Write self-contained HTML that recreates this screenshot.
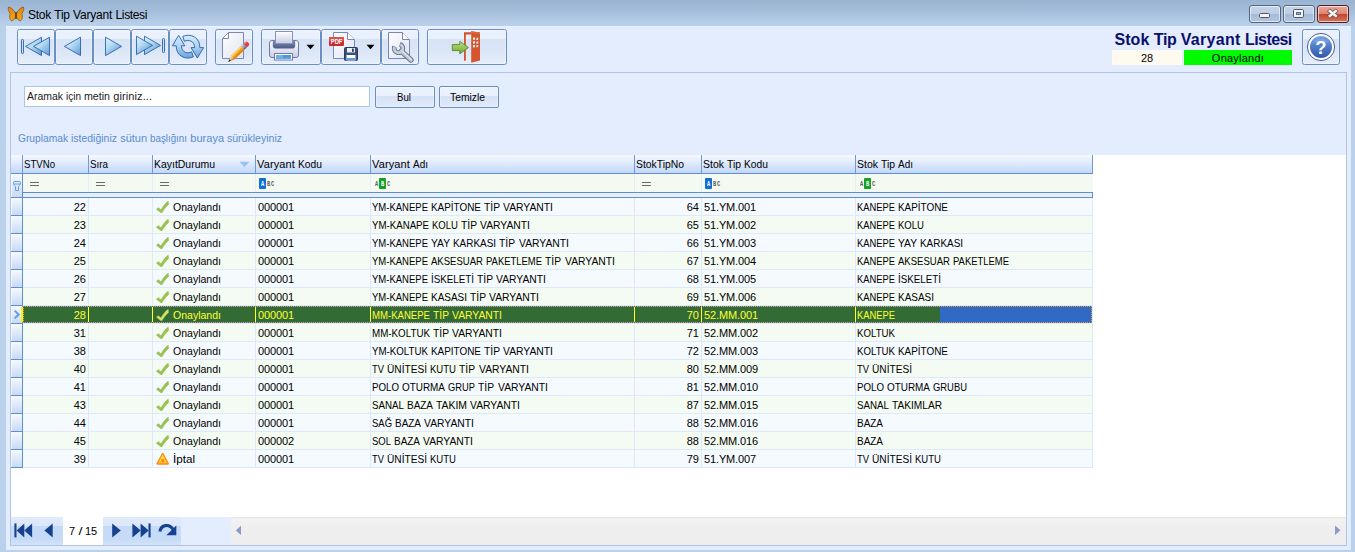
<!DOCTYPE html>
<html lang="tr">
<head>
<meta charset="utf-8">
<title>Stok Tip Varyant Listesi</title>
<style>
*{box-sizing:border-box;margin:0;padding:0}
html,body{width:1355px;height:552px;overflow:hidden}
body{position:relative;background:#b9d1ea;font-family:"Liberation Sans",sans-serif;font-size:11px;color:#000}
div,svg{position:absolute}
span{white-space:nowrap}
.w{display:inline-block;transform-origin:0 50%;vertical-align:baseline}
#titlebar{left:0;top:0;width:1355px;height:26px;background:linear-gradient(#99b4d1 0,#a2bbd8 35%,#b3cbe6 80%,#b9d1ea 100%)}
#client{left:6px;top:26px;width:1345px;height:524px;background:#e3edfd;border-top:1px solid #eaf2fe}
#title{left:28px;top:8px;font-size:12px;line-height:14px;white-space:nowrap;color:#000}
.cap{top:5px;width:32px;height:18px;border:1px solid #56657f;border-radius:3px;box-shadow:inset 0 0 0 1px rgba(255,255,255,.6)}
.capn{background:linear-gradient(#c4d5ea 0,#bccfe6 48%,#a4bbd8 50%,#b1c6e0 100%)}
.capx{border-color:#5a1a1e;background:linear-gradient(#e9a999 0,#dc8672 48%,#c0452b 50%,#d4755c 100%)}
.tb{top:29px;height:36px;border:1px solid #6c8fc2;border-radius:2.500px;background:linear-gradient(#ebf2fd 0,#e8f0fc 9px,#d7e3f6 9px,#dbe6f7 22px,#e6eefb 34px);box-shadow:inset 0 0 0 1px rgba(255,255,255,.3)}
#panel{left:10px;top:72px;width:1337px;height:474px;border:1px solid #b0c4e4;background:#e3edfd}
#search{left:24px;top:86px;width:346px;height:21px;border:1px solid #a9c3ea;background:#fff;line-height:19px;padding-left:2px;color:#1a1a1a;white-space:nowrap}
.btn{top:86px;height:22px;border:1px solid #6c8fc2;border-radius:2px;background:linear-gradient(#ecf3fd 0,#e8f0fc 9px,#d5e2f5 9px,#e0eaf9 20px);box-shadow:inset 0 0 0 1px rgba(255,255,255,.3);text-align:center;line-height:20px;color:#000;padding-right:2.500px}
#grouptxt{left:18px;top:131px;line-height:14px;color:#5b8bd0;white-space:nowrap}
#gridbg{left:11px;top:155px;width:1335px;height:362px;background:#fff}
.hd{top:155px;height:18px;background:linear-gradient(#f5f8fe 0,#e6effd 6px,#d6e4fb 11px,#c3d8f9 18px);border-right:1px solid #6f9ad6;line-height:19px;padding-left:1px;white-space:nowrap;overflow:hidden}
.ind{left:11px;width:12px;border-right:1px solid #5f8fd2;border-bottom:1px solid #5f8fd2;background:linear-gradient(#f6f9fe 0,#dce8f9 55%,#c6daf5 100%);box-shadow:inset 1px 0 0 rgba(255,255,255,.7)}
.row{left:23px;width:1070px;height:18px;border-bottom:1px solid #dde8fa}
.r0{background:#f5faff}.r1{background:#f4fbf2}
.c{top:0;height:17px;line-height:19px;border-right:1px solid #dde8fa;white-space:nowrap;overflow:hidden;padding:0 2px 0 1.300px}
.num{text-align:right;padding-right:2.200px}
.dg{padding-left:2px}
.sel{background:#336b34;color:#ffff33}
.sel .c{border-right-color:#ffff33}
.hline{height:1px;background:#5f8fd2}
</style>
</head>
<body>
<div id="titlebar"></div>
<div id="client"></div>

<svg style="left:7px;top:6px" width="18" height="17" viewBox="0 0 18 17">
<defs><linearGradient id="bfg" x1="0" y1="0" x2="0" y2="1"><stop offset="0" stop-color="#e08408"/><stop offset=".5" stop-color="#ee960e"/><stop offset="1" stop-color="#f3a414"/></linearGradient></defs>
<path d="M8.6 8.2 C7.6 5 5 1.6 1.6 1 C0.6 1.6 1.4 5.2 3.2 7.6 C2 9.6 2.6 13.6 4.4 14.8 C6.2 15 8 12.6 8.6 10.4 Z" fill="url(#bfg)" stroke="#6e4312" stroke-width=".6"/>
<path d="M9.4 8.2 C10.4 5 13 1.6 16.4 1 C17.4 1.6 16.6 5.2 14.8 7.6 C16 9.6 15.4 13.6 13.6 14.8 C11.8 15 10 12.6 9.4 10.4 Z" fill="url(#bfg)" stroke="#6e4312" stroke-width=".6"/>
<path d="M9 6.4 L9 12.6" stroke="#4a3020" stroke-width="1.3" stroke-linecap="round"/>
</svg>
<div id="title"><span style="letter-spacing:-0.254px">Stok</span> <span style="letter-spacing:-0.311px">Tip</span> <span style="letter-spacing:-0.181px">Varyant</span> <span style="letter-spacing:-0.359px">Listesi</span></div>
<div class="cap capn" style="left:1249px"></div><div class="cap capn" style="left:1283px"></div><div class="cap capx" style="left:1317px"></div>
<svg style="left:1249px;top:5px" width="100" height="18" viewBox="0 0 100 18">
<rect x="10.5" y="8.500" width="10" height="4" rx="1.200" fill="#f4f4f4" stroke="#5a5560" stroke-width="1"/>
<rect x="44.500" y="4.500" width="10" height="8" rx="1.2" fill="#f4f4f4" stroke="#5a5560" stroke-width="1"/>
<rect x="47.500" y="7.500" width="4" height="2" fill="#9db4d4" stroke="#5a6a8a" stroke-width="1"/>
<g stroke-linecap="butt" fill="none"><path d="M79.400 5 L88.200 12 M88.200 5 L79.400 12" stroke="#6a3a3a" stroke-width="4"/><path d="M79.800 5.300 L87.800 11.700 M87.800 5.300 L79.800 11.700" stroke="#f4f4f4" stroke-width="2.700"/></g>
</svg>
<div class="tb" style="left:17px;width:38px"></div>
<div class="tb" style="left:55px;width:38px"></div>
<div class="tb" style="left:93px;width:38px"></div>
<div class="tb" style="left:131px;width:38px"></div>
<div class="tb" style="left:169px;width:38px"></div>
<div class="tb" style="left:215px;width:38px"></div>
<div class="tb" style="left:261px;width:60px"></div>
<div class="tb" style="left:321px;width:60px"></div>
<div class="tb" style="left:381px;width:38px"></div>
<div class="tb" style="left:427px;width:80px"></div>
<div class="tb" style="left:1302px;width:38px"></div>
<svg style="left:0;top:26px" width="1355" height="44" viewBox="0 26 1355 44">
<defs>
<linearGradient id="tri" x1="0" y1="0" x2="0" y2="1"><stop offset="0" stop-color="#d4f0fa"/><stop offset=".5" stop-color="#a9d3ef"/><stop offset="1" stop-color="#6aa3db"/></linearGradient>
<linearGradient id="trih" x1="0" y1="0" x2="1" y2="1"><stop offset="0" stop-color="#dcf4fc"/><stop offset=".45" stop-color="#b4dcf2"/><stop offset="1" stop-color="#5e9ad6"/></linearGradient>
<linearGradient id="trihr" x1="0" y1="0" x2=".7" y2="1"><stop offset="0" stop-color="#dcf4fc"/><stop offset=".45" stop-color="#b4dcf2"/><stop offset="1" stop-color="#5e9ad6"/></linearGradient>
<linearGradient id="pg" x1="0" y1="0" x2="1" y2="1"><stop offset="0" stop-color="#ffffff"/><stop offset="1" stop-color="#dfe3f2"/></linearGradient>
<linearGradient id="hlp" x1="0" y1="0" x2="0" y2="1"><stop offset="0" stop-color="#7aa4e0"/><stop offset=".45" stop-color="#4f7fcb"/><stop offset="1" stop-color="#3458ac"/></linearGradient>
<linearGradient id="grn" x1="0" y1="0" x2="0" y2="1"><stop offset="0" stop-color="#c5e28a"/><stop offset="1" stop-color="#6aa62e"/></linearGradient>
<linearGradient id="prt" x1="0" y1="0" x2="0" y2="1"><stop offset="0" stop-color="#ffffff"/><stop offset="1" stop-color="#c8cee4"/></linearGradient>
<linearGradient id="prd" x1="0" y1="0" x2="0" y2="1"><stop offset="0" stop-color="#7d8db4"/><stop offset="1" stop-color="#4a5a86"/></linearGradient>
<linearGradient id="wr" x1="0" y1="0" x2="1" y2="1"><stop offset="0" stop-color="#e6ebf3"/><stop offset="1" stop-color="#9aa7bd"/></linearGradient>
</defs>
<!-- first -->
<g stroke="#2a59a9" stroke-width=".85" stroke-linejoin="miter">
<rect x="21.500" y="39.500" width="2" height="14" rx=".8" fill="#bfe2f6"/>
<path d="M41.500 37.200 L41.500 55.600 L25.600 46.400 Z" fill="url(#trih)"/>
<path d="M49.500 37.200 L49.500 55.600 L33.600 46.400 Z" fill="url(#trih)"/>
<!-- prev -->
<path d="M80.500 37.200 L80.500 55.600 L64.400 46.400 Z" fill="url(#trih)"/>
<!-- next -->
<path d="M105.500 37.200 L105.500 55.600 L121.600 46.400 Z" fill="url(#trihr)"/>
<!-- last -->
<path d="M144.500 36.200 L144.500 54.600 L160.500 45.400 Z" fill="url(#trihr)"/>
<path d="M136.500 36.200 L136.500 54.600 L152.500 45.400 Z" fill="url(#trihr)"/>
<rect x="162.500" y="38.500" width="2" height="14" rx=".8" fill="#bfe2f6"/>
</g>
<!-- refresh -->
<g stroke="#2c5dab" stroke-width=".9" stroke-linejoin="round">
<path d="M172.400 45.800 L178.600 35.400 L184.800 45.800 L181.400 45.800 C181.400 52.200 187.400 54.400 191.600 51.800 L193.400 56.800 C185.400 60.600 176 55.800 176.200 45.800 Z" fill="url(#tri)"/>
<path d="M203.600 47.600 L197.400 58 L191 47.600 L194.600 47.600 C194.800 41.400 188.600 38.800 184.400 41.400 L182.800 36.400 C190.800 33 200.200 37.600 199.800 47.600 Z" fill="url(#tri)"/>
</g>
<!-- edit: page + pencil -->
<path d="M228.500 32.500 L243.500 32.500 L243.500 58.500 L222.500 58.500 L222.500 38.500 Z" fill="url(#pg)" stroke="#7c86b8" stroke-width="1"/>
<path d="M228.500 32.500 L228.500 38.500 L222.500 38.500 Z" fill="#fff" stroke="#7c86b8" stroke-width="1" stroke-linejoin="round"/>
<g>
<path d="M230.84 55.87 L241.14 45.94 L244.61 49.54 L234.31 59.47 Z" fill="#f0a21a"/>
<path d="M230.84 55.87 L241.14 45.94 L242.25 47.09 L231.95 57.03 Z" fill="#fbd774"/>
<path d="M233.27 58.39 L243.57 48.46 L244.61 49.54 L234.31 59.47 Z" fill="#d98410"/>
<path d="M228.40 61.70 L230.84 55.87 L234.31 59.47 Z" fill="#ecc9a0"/>
<path d="M228.40 61.70 L232.92 58.03 L234.31 59.47 Z" fill="#c98f5a"/>
<path d="M228.18 61.91 L229.40 59.28 L230.86 60.79 Z" fill="#1c1c24"/>
<path d="M241.14 45.94 L243.15 43.99 L246.62 47.59 L244.61 49.54 Z" fill="#8c9cc4"/>
<path d="M241.14 45.94 L243.15 43.99 L244.20 45.07 L242.18 47.02 Z" fill="#c9d3ea"/>
<path d="M243.71 48.60 L245.72 46.66 L246.62 47.59 L244.61 49.54 Z" fill="#5a6aa0"/>
<path d="M243.15 43.99 L245.60 41.63 L247.30 41.66 L249.10 43.54 L249.07 45.23 L246.62 47.59 Z" fill="#d8423a"/>
<path d="M243.15 43.99 L245.60 41.63 L247.22 42.16 L244.20 45.07 Z" fill="#ee7a70"/>
</g>
<!-- printer -->
<rect x="269.500" y="40.500" width="29" height="17" rx="2.500" fill="url(#prt)" stroke="#6f7aa6" stroke-width="1"/>
<path d="M272.800 40.500 L295.200 40.500 L295.200 45.500 Q295.200 48.600 292 48.600 L276 48.600 Q272.800 48.600 272.800 45.500 Z" fill="url(#prd)"/>
<rect x="275.500" y="31.500" width="17" height="12" fill="url(#prt)" stroke="#8a92b8" stroke-width="1"/>
<rect x="274.500" y="53.500" width="18" height="6.500" fill="#fff" stroke="#6f7aa6" stroke-width="1"/>
<rect x="276" y="55" width="15" height="3.800" fill="#4a98e0"/>
<rect x="276" y="55" width="7" height="3.800" fill="#6cb0ea"/>
<path d="M306.500 44.800 L314.500 44.800 L310.500 49.200 Z" fill="#000"/>
<!-- pdf + floppy -->
<path d="M333.500 32.500 L347.500 32.500 L354.500 39.500 L354.500 58.500 L333.500 58.500 Z" fill="url(#pg)" stroke="#7c86b8" stroke-width="1"/>
<path d="M347.500 32.500 L347.500 39.500 L354.500 39.500" fill="#fff" stroke="#7c86b8" stroke-width="1"/>
<rect x="329" y="37" width="15" height="9" rx="1" fill="#cf2a2a"/>
<rect x="329" y="37" width="15" height="4" rx="1" fill="#e05050"/>
<text x="330.800" y="44.300" font-family="Liberation Sans, sans-serif" font-weight="bold" font-size="7" fill="#fff" textLength="11.600" lengthAdjust="spacingAndGlyphs">PDF</text>
<rect x="344.500" y="47.500" width="13" height="13" rx="1" fill="#3d4f7c" stroke="#2a3a64" stroke-width="1"/>
<rect x="347" y="48" width="8" height="4.500" fill="#e9edf6"/>
<rect x="352" y="48.600" width="1.800" height="3.200" fill="#2a3a64"/>
<rect x="346.500" y="55" width="9" height="5.500" fill="#fff"/>
<rect x="346.500" y="58" width="9" height="2" fill="#5aa0e6"/>
<path d="M366.500 44.800 L374.500 44.800 L370.500 49.200 Z" fill="#000"/>
<!-- page + wrench -->
<path d="M388.500 32.500 L402.500 32.500 L409.500 39.500 L409.500 58.500 L388.500 58.500 Z" fill="url(#pg)" stroke="#7c86b8" stroke-width="1"/>
<path d="M402.500 32.500 L402.500 39.500 L409.500 39.500" fill="#fff" stroke="#7c86b8" stroke-width="1"/>
<g fill="none" stroke-linecap="butt">
<path d="M401.300 51.200 L411 60" stroke="#66728c" stroke-width="5.400" stroke-linecap="round"/>
<path d="M399.90 44.33 A4.3 4.3 0 1 1 394.60 46.58" stroke="#66728c" stroke-width="4.800"/>
<path d="M401.300 51.200 L411 60" stroke="#bcc5d4" stroke-width="3.600" stroke-linecap="round"/>
<path d="M400.32 44.50 A4.3 4.3 0 1 1 394.43 47.00" stroke="#c6cedb" stroke-width="3"/>
<path d="M402.400 51.300 L411.400 59.500" stroke="#e1e6ee" stroke-width="1.200" stroke-linecap="round"/>
</g>
<!-- exit -->
<path d="M464 32.200 L471.400 32.200 L471.400 34.400 L465.800 34.400 L465.800 60.800 L464 60.800 Z" fill="#d6522c"/>
<path d="M471.200 31.200 L480 32.400 L480 60.400 L471.200 62.800 Z" fill="#d6552d"/>
<path d="M471.200 31.200 L480 32.400 L480 34 L471.200 33 Z" fill="#e0663c"/>
<g fill="#d8f0e4"><rect x="473" y="37.400" width="2" height="2.400"/><rect x="476.400" y="37.800" width="1.800" height="2.200"/><rect x="473" y="41.200" width="2" height="2.400"/><rect x="476.400" y="41.400" width="1.800" height="2.200"/><rect x="473" y="45" width="2" height="2.400"/><rect x="476.400" y="45" width="1.800" height="2.200"/></g>
<path d="M452.300 44.600 L459.800 44.600 L459.800 41.400 L468.400 47.600 L459.800 53.800 L459.800 50.600 L452.300 50.600 Z" fill="url(#grn)" stroke="#4f8a1e" stroke-width=".9" stroke-linejoin="round"/>
<!-- help -->
<circle cx="1321" cy="47" r="13.600" fill="#fff" stroke="#3a4a8a" stroke-width=".9"/>
<circle cx="1321" cy="47" r="11" fill="url(#hlp)"/>
<path d="M1312.500 43.500 A9.500 8.500 0 0 1 1329.500 43.500 A12 7 0 0 0 1312.500 43.500 Z" fill="#8fb2e6" opacity=".5"/>
<text x="1321" y="54.300" font-family="Liberation Sans, sans-serif" font-weight="bold" font-size="18.500" fill="#fff" text-anchor="middle">?</text>
</svg>

<div style="left:1100px;top:30px;width:191.600px;height:20px;text-align:right;font-size:16px;font-weight:bold;line-height:20px;color:#0b0f6a"><span style="letter-spacing:0.082px">Stok</span> <span style="letter-spacing:-0.434px">Tip</span> <span style="letter-spacing:0.298px">Varyant</span> <span style="letter-spacing:-0.598px">Listesi</span></div>
<div style="left:1112px;top:50px;width:70px;height:15px;background:#fffaf0;text-align:center;line-height:17px"><span style="letter-spacing:-0.125px">28</span></div>
<div style="left:1184px;top:50px;width:108px;height:15px;background:#00fb00;text-align:center;line-height:17px"><span style="letter-spacing:0.238px">Onaylandı</span></div>
<div id="panel"></div>
<div id="search"><span class="w" style="width:36px;transform:scaleX(0.9497)">Aramak</span> <span class="w" style="width:15px;transform:scaleX(0.9082)">için</span> <span class="w" style="width:26px;transform:scaleX(0.9663)">metin</span> <span style="letter-spacing:0.109px">giriniz...</span></div>
<div class="btn" style="left:375px;width:60px"><span class="w" style="width:14px;transform:scaleX(0.8802)">Bul</span></div>
<div class="btn" style="left:439px;width:60px"><span class="w" style="width:35px;transform:scaleX(0.9384)">Temizle</span></div>
<div id="grouptxt"><span class="w" style="width:50px;transform:scaleX(0.9294)">Gruplamak</span> <span class="w" style="width:46px;transform:scaleX(0.9521)">istediğiniz</span> <span style="letter-spacing:0.016px">sütun</span> <span class="w" style="width:37px;transform:scaleX(0.8896)">başlığını</span> <span style="letter-spacing:0.060px">buraya</span> <span class="w" style="width:55px;transform:scaleX(0.9570)">sürükleyiniz</span></div>
<div id="gridbg"></div>
<div class="hd" style="left:11px;width:12px"></div>
<div class="hd" style="left:23px;width:66px"><span class="w" style="width:31px;transform:scaleX(0.8740)">STVNo</span></div>
<div class="hd" style="left:89px;width:64px"><span class="w" style="width:18px;transform:scaleX(0.8916)">Sıra</span></div>
<div class="hd" style="left:153px;width:103px"><span class="w" style="width:61px;transform:scaleX(0.9501)">KayıtDurumu</span></div>
<div class="hd" style="left:256px;width:115px"><span style="letter-spacing:0.129px">Varyant</span> <span class="w" style="width:24px;transform:scaleX(0.9337)">Kodu</span></div>
<div class="hd" style="left:371px;width:264px"><span style="letter-spacing:0.129px">Varyant</span> <span class="w" style="width:15px;transform:scaleX(0.9082)">Adı</span></div>
<div class="hd" style="left:635px;width:67px"><span class="w" style="width:48px;transform:scaleX(0.9420)">StokTipNo</span></div>
<div class="hd" style="left:702px;width:154px"><span class="w" style="width:21px;transform:scaleX(0.9539)">Stok</span> <span class="w" style="width:14px;transform:scaleX(0.9412)">Tip</span> <span class="w" style="width:24px;transform:scaleX(0.9337)">Kodu</span></div>
<div class="hd" style="left:856px;width:237px"><span class="w" style="width:21px;transform:scaleX(0.9539)">Stok</span> <span class="w" style="width:14px;transform:scaleX(0.9412)">Tip</span> <span class="w" style="width:15px;transform:scaleX(0.9082)">Adı</span></div>
<svg style="left:239px;top:161px" width="11" height="7" viewBox="0 0 11 7"><path d="M0.500 0.800 L10.500 0.800 L5.500 6 Z" fill="#9bc0f7"/></svg>
<div class="hline" style="left:11px;top:173px;width:1082px"></div>
<div style="left:23px;top:174px;width:1070px;height:18px;background:#f4faf2"></div>
<div style="left:88px;top:174px;width:1px;height:18px;background:#e4edf8"></div>
<div style="left:152px;top:174px;width:1px;height:18px;background:#e4edf8"></div>
<div style="left:255px;top:174px;width:1px;height:18px;background:#e4edf8"></div>
<div style="left:370px;top:174px;width:1px;height:18px;background:#e4edf8"></div>
<div style="left:634px;top:174px;width:1px;height:18px;background:#e4edf8"></div>
<div style="left:701px;top:174px;width:1px;height:18px;background:#e4edf8"></div>
<div style="left:855px;top:174px;width:1px;height:18px;background:#e4edf8"></div>
<div class="ind" style="top:174px;height:24px;border-bottom:0"></div>
<div class="hline" style="left:23px;top:192px;width:1070px"></div>
<div style="left:23px;top:193px;width:1069px;height:4px;background:#e6effb"></div>
<div style="left:1092px;top:192px;width:1px;height:6px;background:#5f8fd2"></div>
<div class="hline" style="left:11px;top:197px;width:1082px"></div>
<svg style="left:12px;top:180px" width="10" height="12" viewBox="0 0 10 12"><path d="M1.500 2.800 Q1.500 1.500 3 1.500 L7 1.500 Q8.500 1.500 8.500 2.800 L8.500 3.600 Q8.500 4.500 7.600 5.400 L6.500 6.500 L6.500 10.500 L3.500 10.500 L3.500 6.500 L2.400 5.400 Q1.500 4.500 1.500 3.600 Z M1.800 4 L8.200 4" fill="none" stroke="#6a9ae0" stroke-width="1"/></svg>
<div style="left:30px;top:182px;width:9px;height:1px;background:#6a6a6a"></div><div style="left:30px;top:185px;width:9px;height:1px;background:#6a6a6a"></div>
<div style="left:96px;top:182px;width:9px;height:1px;background:#6a6a6a"></div><div style="left:96px;top:185px;width:9px;height:1px;background:#6a6a6a"></div>
<div style="left:160px;top:182px;width:9px;height:1px;background:#6a6a6a"></div><div style="left:160px;top:185px;width:9px;height:1px;background:#6a6a6a"></div>
<div style="left:642px;top:182px;width:9px;height:1px;background:#6a6a6a"></div><div style="left:642px;top:185px;width:9px;height:1px;background:#6a6a6a"></div>
<div style="left:259px;top:178px;width:7px;height:11px;background:#0f6fd8;border-radius:1px"></div><div style="left:260.8px;width:6px;color:#fff;font-family:'Liberation Mono',monospace;font-size:6.500px;line-height:11px;height:11px;top:179px;font-weight:bold;transform:scaleX(.82);transform-origin:0 0">A</div><div style="left:266.8px;width:12px;color:#5a5a5a;letter-spacing:1px;font-family:'Liberation Mono',monospace;font-size:6.500px;line-height:11px;height:11px;top:179px;font-weight:bold;transform:scaleX(.82);transform-origin:0 0">BC</div>
<div style="left:705px;top:178px;width:7px;height:11px;background:#0f6fd8;border-radius:1px"></div><div style="left:706.8px;width:6px;color:#fff;font-family:'Liberation Mono',monospace;font-size:6.500px;line-height:11px;height:11px;top:179px;font-weight:bold;transform:scaleX(.82);transform-origin:0 0">A</div><div style="left:712.8px;width:12px;color:#5a5a5a;letter-spacing:1px;font-family:'Liberation Mono',monospace;font-size:6.500px;line-height:11px;height:11px;top:179px;font-weight:bold;transform:scaleX(.82);transform-origin:0 0">BC</div>
<div style="left:374.8px;width:6px;color:#5a5a5a;font-family:'Liberation Mono',monospace;font-size:6.500px;line-height:11px;height:11px;top:179px;font-weight:bold;transform:scaleX(.82);transform-origin:0 0">A</div><div style="left:379px;top:178px;width:7px;height:11px;background:#12a12a;border-radius:1px"></div><div style="left:380.8px;width:6px;color:#fff;font-family:'Liberation Mono',monospace;font-size:6.500px;line-height:11px;height:11px;top:179px;font-weight:bold;transform:scaleX(.82);transform-origin:0 0">B</div><div style="left:386.8px;width:6px;color:#5a5a5a;font-family:'Liberation Mono',monospace;font-size:6.500px;line-height:11px;height:11px;top:179px;font-weight:bold;transform:scaleX(.82);transform-origin:0 0">C</div>
<div style="left:859.8px;width:6px;color:#5a5a5a;font-family:'Liberation Mono',monospace;font-size:6.500px;line-height:11px;height:11px;top:179px;font-weight:bold;transform:scaleX(.82);transform-origin:0 0">A</div><div style="left:864px;top:178px;width:7px;height:11px;background:#12a12a;border-radius:1px"></div><div style="left:865.8px;width:6px;color:#fff;font-family:'Liberation Mono',monospace;font-size:6.500px;line-height:11px;height:11px;top:179px;font-weight:bold;transform:scaleX(.82);transform-origin:0 0">B</div><div style="left:871.8px;width:6px;color:#5a5a5a;font-family:'Liberation Mono',monospace;font-size:6.500px;line-height:11px;height:11px;top:179px;font-weight:bold;transform:scaleX(.82);transform-origin:0 0">C</div>
<div class="ind" style="top:198px;height:18px"></div>
<div class="row r0" style="top:198px">
<div class="c num" style="left:0px;width:66px"><span style="letter-spacing:-0.125px">22</span></div>
<div class="c " style="left:66px;width:64px"></div>
<div class="c " style="left:130px;width:103px"><svg style="left:2.600px;top:3px" width="14" height="13" viewBox="0 0 14 13"><path d="M0.500 8.200 L2.300 6.700 L5 9 C6.800 5.600 9.200 2.400 12.200 0.200 L12.500 3.600 C9.800 5.800 7.700 8.600 6.100 11.600 L4.700 11.600 Z" fill="#98c44c" stroke="#82aa3a" stroke-width=".5" stroke-linejoin="round"/></svg><span style="position:absolute;left:20px"><span class="w" style="width:48px;transform:scaleX(0.9570)">Onaylandı</span></span></div>
<div class="c dg" style="left:233px;width:115px"><span style="letter-spacing:-0.120px">000001</span></div>
<div class="c " style="left:348px;width:264px"><span class="w" style="width:56px;transform:scaleX(0.8642)">YM-KANEPE</span> <span class="w" style="width:50px;transform:scaleX(0.9019)">KAPİTONE</span> <span class="w" style="width:16px;transform:scaleX(0.9343)">TİP</span> <span class="w" style="width:50px;transform:scaleX(0.9401)">VARYANTI</span></div>
<div class="c num" style="left:612px;width:67px"><span style="letter-spacing:-0.125px">64</span></div>
<div class="c dg" style="left:679px;width:154px"><span style="letter-spacing:-0.134px">51.YM.001</span></div>
<div class="c" style="left:833px;width:237px;border-right:0"><span class="w" style="width:38px;transform:scaleX(0.8512)">KANEPE</span> <span class="w" style="width:50px;transform:scaleX(0.9019)">KAPİTONE</span></div>
</div>
<div class="ind" style="top:216px;height:18px"></div>
<div class="row r1" style="top:216px">
<div class="c num" style="left:0px;width:66px"><span style="letter-spacing:-0.125px">23</span></div>
<div class="c " style="left:66px;width:64px"></div>
<div class="c " style="left:130px;width:103px"><svg style="left:2.600px;top:3px" width="14" height="13" viewBox="0 0 14 13"><path d="M0.500 8.200 L2.300 6.700 L5 9 C6.800 5.600 9.200 2.400 12.200 0.200 L12.500 3.600 C9.800 5.800 7.700 8.600 6.100 11.600 L4.700 11.600 Z" fill="#98c44c" stroke="#82aa3a" stroke-width=".5" stroke-linejoin="round"/></svg><span style="position:absolute;left:20px"><span class="w" style="width:48px;transform:scaleX(0.9570)">Onaylandı</span></span></div>
<div class="c dg" style="left:233px;width:115px"><span style="letter-spacing:-0.120px">000001</span></div>
<div class="c " style="left:348px;width:264px"><span class="w" style="width:57px;transform:scaleX(0.8797)">YM-KANAPE</span> <span class="w" style="width:26px;transform:scaleX(0.8676)">KOLU</span> <span class="w" style="width:16px;transform:scaleX(0.9343)">TİP</span> <span class="w" style="width:50px;transform:scaleX(0.9401)">VARYANTI</span></div>
<div class="c num" style="left:612px;width:67px"><span style="letter-spacing:-0.125px">65</span></div>
<div class="c dg" style="left:679px;width:154px"><span style="letter-spacing:-0.134px">51.YM.002</span></div>
<div class="c" style="left:833px;width:237px;border-right:0"><span class="w" style="width:38px;transform:scaleX(0.8512)">KANEPE</span> <span class="w" style="width:26px;transform:scaleX(0.8676)">KOLU</span></div>
</div>
<div class="ind" style="top:234px;height:18px"></div>
<div class="row r0" style="top:234px">
<div class="c num" style="left:0px;width:66px"><span style="letter-spacing:-0.125px">24</span></div>
<div class="c " style="left:66px;width:64px"></div>
<div class="c " style="left:130px;width:103px"><svg style="left:2.600px;top:3px" width="14" height="13" viewBox="0 0 14 13"><path d="M0.500 8.200 L2.300 6.700 L5 9 C6.800 5.600 9.200 2.400 12.200 0.200 L12.500 3.600 C9.800 5.800 7.700 8.600 6.100 11.600 L4.700 11.600 Z" fill="#98c44c" stroke="#82aa3a" stroke-width=".5" stroke-linejoin="round"/></svg><span style="position:absolute;left:20px"><span class="w" style="width:48px;transform:scaleX(0.9570)">Onaylandı</span></span></div>
<div class="c dg" style="left:233px;width:115px"><span style="letter-spacing:-0.120px">000001</span></div>
<div class="c " style="left:348px;width:264px"><span class="w" style="width:56px;transform:scaleX(0.8642)">YM-KANEPE</span> <span class="w" style="width:19px;transform:scaleX(0.9318)">YAY</span> <span class="w" style="width:43px;transform:scaleX(0.9017)">KARKASI</span> <span class="w" style="width:16px;transform:scaleX(0.9343)">TİP</span> <span class="w" style="width:50px;transform:scaleX(0.9401)">VARYANTI</span></div>
<div class="c num" style="left:612px;width:67px"><span style="letter-spacing:-0.125px">66</span></div>
<div class="c dg" style="left:679px;width:154px"><span style="letter-spacing:-0.134px">51.YM.003</span></div>
<div class="c" style="left:833px;width:237px;border-right:0"><span class="w" style="width:38px;transform:scaleX(0.8512)">KANEPE</span> <span class="w" style="width:19px;transform:scaleX(0.9318)">YAY</span> <span class="w" style="width:43px;transform:scaleX(0.9017)">KARKASI</span></div>
</div>
<div class="ind" style="top:252px;height:18px"></div>
<div class="row r1" style="top:252px">
<div class="c num" style="left:0px;width:66px"><span style="letter-spacing:-0.125px">25</span></div>
<div class="c " style="left:66px;width:64px"></div>
<div class="c " style="left:130px;width:103px"><svg style="left:2.600px;top:3px" width="14" height="13" viewBox="0 0 14 13"><path d="M0.500 8.200 L2.300 6.700 L5 9 C6.800 5.600 9.200 2.400 12.200 0.200 L12.500 3.600 C9.800 5.800 7.700 8.600 6.100 11.600 L4.700 11.600 Z" fill="#98c44c" stroke="#82aa3a" stroke-width=".5" stroke-linejoin="round"/></svg><span style="position:absolute;left:20px"><span class="w" style="width:48px;transform:scaleX(0.9570)">Onaylandı</span></span></div>
<div class="c dg" style="left:233px;width:115px"><span style="letter-spacing:-0.120px">000001</span></div>
<div class="c " style="left:348px;width:264px"><span class="w" style="width:56px;transform:scaleX(0.8642)">YM-KANEPE</span> <span class="w" style="width:52px;transform:scaleX(0.8678)">AKSESUAR</span> <span class="w" style="width:56px;transform:scaleX(0.8586)">PAKETLEME</span> <span class="w" style="width:16px;transform:scaleX(0.9343)">TİP</span> <span class="w" style="width:50px;transform:scaleX(0.9401)">VARYANTI</span></div>
<div class="c num" style="left:612px;width:67px"><span style="letter-spacing:-0.125px">67</span></div>
<div class="c dg" style="left:679px;width:154px"><span style="letter-spacing:-0.134px">51.YM.004</span></div>
<div class="c" style="left:833px;width:237px;border-right:0"><span class="w" style="width:38px;transform:scaleX(0.8512)">KANEPE</span> <span class="w" style="width:52px;transform:scaleX(0.8678)">AKSESUAR</span> <span class="w" style="width:56px;transform:scaleX(0.8586)">PAKETLEME</span></div>
</div>
<div class="ind" style="top:270px;height:18px"></div>
<div class="row r0" style="top:270px">
<div class="c num" style="left:0px;width:66px"><span style="letter-spacing:-0.125px">26</span></div>
<div class="c " style="left:66px;width:64px"></div>
<div class="c " style="left:130px;width:103px"><svg style="left:2.600px;top:3px" width="14" height="13" viewBox="0 0 14 13"><path d="M0.500 8.200 L2.300 6.700 L5 9 C6.800 5.600 9.200 2.400 12.200 0.200 L12.500 3.600 C9.800 5.800 7.700 8.600 6.100 11.600 L4.700 11.600 Z" fill="#98c44c" stroke="#82aa3a" stroke-width=".5" stroke-linejoin="round"/></svg><span style="position:absolute;left:20px"><span class="w" style="width:48px;transform:scaleX(0.9570)">Onaylandı</span></span></div>
<div class="c dg" style="left:233px;width:115px"><span style="letter-spacing:-0.120px">000001</span></div>
<div class="c " style="left:348px;width:264px"><span class="w" style="width:56px;transform:scaleX(0.8642)">YM-KANEPE</span> <span class="w" style="width:43px;transform:scaleX(0.8903)">İSKELETİ</span> <span class="w" style="width:16px;transform:scaleX(0.9343)">TİP</span> <span class="w" style="width:50px;transform:scaleX(0.9401)">VARYANTI</span></div>
<div class="c num" style="left:612px;width:67px"><span style="letter-spacing:-0.125px">68</span></div>
<div class="c dg" style="left:679px;width:154px"><span style="letter-spacing:-0.134px">51.YM.005</span></div>
<div class="c" style="left:833px;width:237px;border-right:0"><span class="w" style="width:38px;transform:scaleX(0.8512)">KANEPE</span> <span class="w" style="width:43px;transform:scaleX(0.8903)">İSKELETİ</span></div>
</div>
<div class="ind" style="top:288px;height:18px"></div>
<div class="row r1" style="top:288px">
<div class="c num" style="left:0px;width:66px"><span style="letter-spacing:-0.125px">27</span></div>
<div class="c " style="left:66px;width:64px"></div>
<div class="c " style="left:130px;width:103px"><svg style="left:2.600px;top:3px" width="14" height="13" viewBox="0 0 14 13"><path d="M0.500 8.200 L2.300 6.700 L5 9 C6.800 5.600 9.200 2.400 12.200 0.200 L12.500 3.600 C9.800 5.800 7.700 8.600 6.100 11.600 L4.700 11.600 Z" fill="#98c44c" stroke="#82aa3a" stroke-width=".5" stroke-linejoin="round"/></svg><span style="position:absolute;left:20px"><span class="w" style="width:48px;transform:scaleX(0.9570)">Onaylandı</span></span></div>
<div class="c dg" style="left:233px;width:115px"><span style="letter-spacing:-0.120px">000001</span></div>
<div class="c " style="left:348px;width:264px"><span class="w" style="width:56px;transform:scaleX(0.8642)">YM-KANEPE</span> <span class="w" style="width:36px;transform:scaleX(0.9057)">KASASI</span> <span class="w" style="width:16px;transform:scaleX(0.9343)">TİP</span> <span class="w" style="width:50px;transform:scaleX(0.9401)">VARYANTI</span></div>
<div class="c num" style="left:612px;width:67px"><span style="letter-spacing:-0.125px">69</span></div>
<div class="c dg" style="left:679px;width:154px"><span style="letter-spacing:-0.134px">51.YM.006</span></div>
<div class="c" style="left:833px;width:237px;border-right:0"><span class="w" style="width:38px;transform:scaleX(0.8512)">KANEPE</span> <span class="w" style="width:36px;transform:scaleX(0.9057)">KASASI</span></div>
</div>
<div class="ind" style="top:306px;height:18px"></div>
<div class="row sel" style="top:306px">
<div class="c num" style="left:0px;width:66px"><span style="letter-spacing:-0.125px">28</span></div>
<div class="c " style="left:66px;width:64px"></div>
<div class="c " style="left:130px;width:103px"><svg style="left:2.600px;top:3px" width="14" height="13" viewBox="0 0 14 13"><path d="M0.500 8.200 L2.300 6.700 L5 9 C6.800 5.600 9.200 2.400 12.200 0.200 L12.500 3.600 C9.800 5.800 7.700 8.600 6.100 11.600 L4.700 11.600 Z" fill="#d3e467" stroke="#c3d85c" stroke-width=".5" stroke-linejoin="round"/></svg><span style="position:absolute;left:20px"><span class="w" style="width:48px;transform:scaleX(0.9570)">Onaylandı</span></span></div>
<div class="c dg" style="left:233px;width:115px"><span style="letter-spacing:-0.120px">000001</span></div>
<div class="c " style="left:348px;width:264px"><span class="w" style="width:58px;transform:scaleX(0.8705)">MM-KANEPE</span> <span class="w" style="width:16px;transform:scaleX(0.9343)">TİP</span> <span class="w" style="width:50px;transform:scaleX(0.9401)">VARYANTI</span></div>
<div class="c num" style="left:612px;width:67px"><span style="letter-spacing:-0.125px">70</span></div>
<div class="c dg" style="left:679px;width:154px"><span style="letter-spacing:-0.115px">52.MM.001</span></div>
<div class="c" style="left:833px;width:237px;border-right:0"><span class="w" style="width:38px;transform:scaleX(0.8512)">KANEPE</span></div>
</div>
<div class="ind" style="top:324px;height:18px"></div>
<div class="row r1" style="top:324px">
<div class="c num" style="left:0px;width:66px"><span style="letter-spacing:-0.125px">31</span></div>
<div class="c " style="left:66px;width:64px"></div>
<div class="c " style="left:130px;width:103px"><svg style="left:2.600px;top:3px" width="14" height="13" viewBox="0 0 14 13"><path d="M0.500 8.200 L2.300 6.700 L5 9 C6.800 5.600 9.200 2.400 12.200 0.200 L12.500 3.600 C9.800 5.800 7.700 8.600 6.100 11.600 L4.700 11.600 Z" fill="#98c44c" stroke="#82aa3a" stroke-width=".5" stroke-linejoin="round"/></svg><span style="position:absolute;left:20px"><span class="w" style="width:48px;transform:scaleX(0.9570)">Onaylandı</span></span></div>
<div class="c dg" style="left:233px;width:115px"><span style="letter-spacing:-0.120px">000001</span></div>
<div class="c " style="left:348px;width:264px"><span class="w" style="width:58px;transform:scaleX(0.8897)">MM-KOLTUK</span> <span class="w" style="width:16px;transform:scaleX(0.9343)">TİP</span> <span class="w" style="width:50px;transform:scaleX(0.9401)">VARYANTI</span></div>
<div class="c num" style="left:612px;width:67px"><span style="letter-spacing:-0.125px">71</span></div>
<div class="c dg" style="left:679px;width:154px"><span style="letter-spacing:-0.115px">52.MM.002</span></div>
<div class="c" style="left:833px;width:237px;border-right:0"><span class="w" style="width:38px;transform:scaleX(0.8796)">KOLTUK</span></div>
</div>
<div class="ind" style="top:342px;height:18px"></div>
<div class="row r0" style="top:342px">
<div class="c num" style="left:0px;width:66px"><span style="letter-spacing:-0.125px">38</span></div>
<div class="c " style="left:66px;width:64px"></div>
<div class="c " style="left:130px;width:103px"><svg style="left:2.600px;top:3px" width="14" height="13" viewBox="0 0 14 13"><path d="M0.500 8.200 L2.300 6.700 L5 9 C6.800 5.600 9.200 2.400 12.200 0.200 L12.500 3.600 C9.800 5.800 7.700 8.600 6.100 11.600 L4.700 11.600 Z" fill="#98c44c" stroke="#82aa3a" stroke-width=".5" stroke-linejoin="round"/></svg><span style="position:absolute;left:20px"><span class="w" style="width:48px;transform:scaleX(0.9570)">Onaylandı</span></span></div>
<div class="c dg" style="left:233px;width:115px"><span style="letter-spacing:-0.120px">000001</span></div>
<div class="c " style="left:348px;width:264px"><span class="w" style="width:56px;transform:scaleX(0.8838)">YM-KOLTUK</span> <span class="w" style="width:50px;transform:scaleX(0.9019)">KAPITONE</span> <span class="w" style="width:16px;transform:scaleX(0.9343)">TİP</span> <span class="w" style="width:50px;transform:scaleX(0.9401)">VARYANTI</span></div>
<div class="c num" style="left:612px;width:67px"><span style="letter-spacing:-0.125px">72</span></div>
<div class="c dg" style="left:679px;width:154px"><span style="letter-spacing:-0.115px">52.MM.003</span></div>
<div class="c" style="left:833px;width:237px;border-right:0"><span class="w" style="width:38px;transform:scaleX(0.8796)">KOLTUK</span> <span class="w" style="width:50px;transform:scaleX(0.9019)">KAPİTONE</span></div>
</div>
<div class="ind" style="top:360px;height:18px"></div>
<div class="row r1" style="top:360px">
<div class="c num" style="left:0px;width:66px"><span style="letter-spacing:-0.125px">40</span></div>
<div class="c " style="left:66px;width:64px"></div>
<div class="c " style="left:130px;width:103px"><svg style="left:2.600px;top:3px" width="14" height="13" viewBox="0 0 14 13"><path d="M0.500 8.200 L2.300 6.700 L5 9 C6.800 5.600 9.200 2.400 12.200 0.200 L12.500 3.600 C9.800 5.800 7.700 8.600 6.100 11.600 L4.700 11.600 Z" fill="#98c44c" stroke="#82aa3a" stroke-width=".5" stroke-linejoin="round"/></svg><span style="position:absolute;left:20px"><span class="w" style="width:48px;transform:scaleX(0.9570)">Onaylandı</span></span></div>
<div class="c dg" style="left:233px;width:115px"><span style="letter-spacing:-0.120px">000001</span></div>
<div class="c " style="left:348px;width:264px"><span class="w" style="width:12px;transform:scaleX(0.8533)">TV</span> <span class="w" style="width:40px;transform:scaleX(0.9215)">ÜNİTESİ</span> <span class="w" style="width:26px;transform:scaleX(0.8680)">KUTU</span> <span class="w" style="width:16px;transform:scaleX(0.9343)">TİP</span> <span class="w" style="width:50px;transform:scaleX(0.9401)">VARYANTI</span></div>
<div class="c num" style="left:612px;width:67px"><span style="letter-spacing:-0.125px">80</span></div>
<div class="c dg" style="left:679px;width:154px"><span style="letter-spacing:-0.115px">52.MM.009</span></div>
<div class="c" style="left:833px;width:237px;border-right:0"><span class="w" style="width:12px;transform:scaleX(0.8533)">TV</span> <span class="w" style="width:40px;transform:scaleX(0.9215)">ÜNİTESİ</span></div>
</div>
<div class="ind" style="top:378px;height:18px"></div>
<div class="row r0" style="top:378px">
<div class="c num" style="left:0px;width:66px"><span style="letter-spacing:-0.125px">41</span></div>
<div class="c " style="left:66px;width:64px"></div>
<div class="c " style="left:130px;width:103px"><svg style="left:2.600px;top:3px" width="14" height="13" viewBox="0 0 14 13"><path d="M0.500 8.200 L2.300 6.700 L5 9 C6.800 5.600 9.200 2.400 12.200 0.200 L12.500 3.600 C9.800 5.800 7.700 8.600 6.100 11.600 L4.700 11.600 Z" fill="#98c44c" stroke="#82aa3a" stroke-width=".5" stroke-linejoin="round"/></svg><span style="position:absolute;left:20px"><span class="w" style="width:48px;transform:scaleX(0.9570)">Onaylandı</span></span></div>
<div class="c dg" style="left:233px;width:115px"><span style="letter-spacing:-0.120px">000001</span></div>
<div class="c " style="left:348px;width:264px"><span class="w" style="width:27px;transform:scaleX(0.8830)">POLO</span> <span class="w" style="width:43px;transform:scaleX(0.9020)">OTURMA</span> <span class="w" style="width:27px;transform:scaleX(0.8496)">GRUP</span> <span class="w" style="width:16px;transform:scaleX(0.9343)">TİP</span> <span class="w" style="width:50px;transform:scaleX(0.9401)">VARYANTI</span></div>
<div class="c num" style="left:612px;width:67px"><span style="letter-spacing:-0.125px">81</span></div>
<div class="c dg" style="left:679px;width:154px"><span style="letter-spacing:-0.115px">52.MM.010</span></div>
<div class="c" style="left:833px;width:237px;border-right:0"><span class="w" style="width:27px;transform:scaleX(0.8830)">POLO</span> <span class="w" style="width:43px;transform:scaleX(0.9020)">OTURMA</span> <span class="w" style="width:34px;transform:scaleX(0.8557)">GRUBU</span></div>
</div>
<div class="ind" style="top:396px;height:18px"></div>
<div class="row r1" style="top:396px">
<div class="c num" style="left:0px;width:66px"><span style="letter-spacing:-0.125px">43</span></div>
<div class="c " style="left:66px;width:64px"></div>
<div class="c " style="left:130px;width:103px"><svg style="left:2.600px;top:3px" width="14" height="13" viewBox="0 0 14 13"><path d="M0.500 8.200 L2.300 6.700 L5 9 C6.800 5.600 9.200 2.400 12.200 0.200 L12.500 3.600 C9.800 5.800 7.700 8.600 6.100 11.600 L4.700 11.600 Z" fill="#98c44c" stroke="#82aa3a" stroke-width=".5" stroke-linejoin="round"/></svg><span style="position:absolute;left:20px"><span class="w" style="width:48px;transform:scaleX(0.9570)">Onaylandı</span></span></div>
<div class="c dg" style="left:233px;width:115px"><span style="letter-spacing:-0.120px">000001</span></div>
<div class="c " style="left:348px;width:264px"><span class="w" style="width:32px;transform:scaleX(0.8870)">SANAL</span> <span class="w" style="width:26px;transform:scaleX(0.9048)">BAZA</span> <span class="w" style="width:31px;transform:scaleX(0.9452)">TAKIM</span> <span class="w" style="width:50px;transform:scaleX(0.9401)">VARYANTI</span></div>
<div class="c num" style="left:612px;width:67px"><span style="letter-spacing:-0.125px">87</span></div>
<div class="c dg" style="left:679px;width:154px"><span style="letter-spacing:-0.115px">52.MM.015</span></div>
<div class="c" style="left:833px;width:237px;border-right:0"><span class="w" style="width:32px;transform:scaleX(0.8870)">SANAL</span> <span class="w" style="width:50px;transform:scaleX(0.9225)">TAKIMLAR</span></div>
</div>
<div class="ind" style="top:414px;height:18px"></div>
<div class="row r0" style="top:414px">
<div class="c num" style="left:0px;width:66px"><span style="letter-spacing:-0.125px">44</span></div>
<div class="c " style="left:66px;width:64px"></div>
<div class="c " style="left:130px;width:103px"><svg style="left:2.600px;top:3px" width="14" height="13" viewBox="0 0 14 13"><path d="M0.500 8.200 L2.300 6.700 L5 9 C6.800 5.600 9.200 2.400 12.200 0.200 L12.500 3.600 C9.800 5.800 7.700 8.600 6.100 11.600 L4.700 11.600 Z" fill="#98c44c" stroke="#82aa3a" stroke-width=".5" stroke-linejoin="round"/></svg><span style="position:absolute;left:20px"><span class="w" style="width:48px;transform:scaleX(0.9570)">Onaylandı</span></span></div>
<div class="c dg" style="left:233px;width:115px"><span style="letter-spacing:-0.120px">000001</span></div>
<div class="c " style="left:348px;width:264px"><span class="w" style="width:20px;transform:scaleX(0.8608)">SAĞ</span> <span class="w" style="width:26px;transform:scaleX(0.9048)">BAZA</span> <span class="w" style="width:50px;transform:scaleX(0.9401)">VARYANTI</span></div>
<div class="c num" style="left:612px;width:67px"><span style="letter-spacing:-0.125px">88</span></div>
<div class="c dg" style="left:679px;width:154px"><span style="letter-spacing:-0.115px">52.MM.016</span></div>
<div class="c" style="left:833px;width:237px;border-right:0"><span class="w" style="width:26px;transform:scaleX(0.9048)">BAZA</span></div>
</div>
<div class="ind" style="top:432px;height:18px"></div>
<div class="row r1" style="top:432px">
<div class="c num" style="left:0px;width:66px"><span style="letter-spacing:-0.125px">45</span></div>
<div class="c " style="left:66px;width:64px"></div>
<div class="c " style="left:130px;width:103px"><svg style="left:2.600px;top:3px" width="14" height="13" viewBox="0 0 14 13"><path d="M0.500 8.200 L2.300 6.700 L5 9 C6.800 5.600 9.200 2.400 12.200 0.200 L12.500 3.600 C9.800 5.800 7.700 8.600 6.100 11.600 L4.700 11.600 Z" fill="#98c44c" stroke="#82aa3a" stroke-width=".5" stroke-linejoin="round"/></svg><span style="position:absolute;left:20px"><span class="w" style="width:48px;transform:scaleX(0.9570)">Onaylandı</span></span></div>
<div class="c dg" style="left:233px;width:115px"><span style="letter-spacing:-0.120px">000002</span></div>
<div class="c " style="left:348px;width:264px"><span class="w" style="width:19px;transform:scaleX(0.8630)">SOL</span> <span class="w" style="width:26px;transform:scaleX(0.9048)">BAZA</span> <span class="w" style="width:50px;transform:scaleX(0.9401)">VARYANTI</span></div>
<div class="c num" style="left:612px;width:67px"><span style="letter-spacing:-0.125px">88</span></div>
<div class="c dg" style="left:679px;width:154px"><span style="letter-spacing:-0.115px">52.MM.016</span></div>
<div class="c" style="left:833px;width:237px;border-right:0"><span class="w" style="width:26px;transform:scaleX(0.9048)">BAZA</span></div>
</div>
<div class="ind" style="top:450px;height:18px"></div>
<div class="row r0" style="top:450px">
<div class="c num" style="left:0px;width:66px"><span style="letter-spacing:-0.125px">39</span></div>
<div class="c " style="left:66px;width:64px"></div>
<div class="c " style="left:130px;width:103px"><svg style="left:2.600px;top:2px" width="14" height="14" viewBox="0 0 14 14"><defs><linearGradient id="wg" x1="0" y1="0" x2="0" y2="1"><stop offset="0" stop-color="#ffe867"/><stop offset="1" stop-color="#ffc21c"/></linearGradient></defs><path d="M6.700 2 L12 11.700 L1.400 11.700 Z" fill="url(#wg)" stroke="#ff8a14" stroke-width="2" stroke-linejoin="round"/><path d="M6.700 2.600 L11.300 11.200 L2.100 11.200 Z" fill="url(#wg)"/><path d="M5.600 7.400 L7.800 10.200 M7.800 7.400 L5.600 10.200" stroke="#ff7a10" stroke-width="1.100"/></svg><span style="position:absolute;left:20px"><span class="w" style="width:22px;transform:scaleX(1.0579)">İptal</span></span></div>
<div class="c dg" style="left:233px;width:115px"><span style="letter-spacing:-0.120px">000001</span></div>
<div class="c " style="left:348px;width:264px"><span class="w" style="width:12px;transform:scaleX(0.8533)">TV</span> <span class="w" style="width:40px;transform:scaleX(0.9215)">ÜNİTESİ</span> <span class="w" style="width:26px;transform:scaleX(0.8680)">KUTU</span></div>
<div class="c num" style="left:612px;width:67px"><span style="letter-spacing:-0.125px">79</span></div>
<div class="c dg" style="left:679px;width:154px"><span style="letter-spacing:-0.134px">51.YM.007</span></div>
<div class="c" style="left:833px;width:237px;border-right:0"><span class="w" style="width:12px;transform:scaleX(0.8533)">TV</span> <span class="w" style="width:40px;transform:scaleX(0.9215)">ÜNİTESİ</span> <span class="w" style="width:26px;transform:scaleX(0.8680)">KUTU</span></div>
</div>
<div style="left:940px;top:306px;width:152px;height:17px;background:#316ac5"></div>
<div style="left:23px;top:306px;width:1069px;height:1px;background:#316ac5"></div><div style="left:23px;top:322px;width:1069px;height:1px;background:#316ac5"></div>
<div style="left:23px;top:306px;width:1069px;height:17px;border:1px dotted #eaa224"></div>
<svg style="left:13px;top:309px" width="8" height="11" viewBox="0 0 8 11"><path d="M1.700 1.600 L5.700 5.500 L1.700 9.400" fill="none" stroke="#6a9ae0" stroke-width="2"/></svg>
<div style="left:21.400px;top:307px;width:1.400px;height:15px;background:#f2f214"></div>
<div style="left:1092px;top:198px;width:1px;height:270px;background:#dde8fa"></div>
<div style="left:11px;top:517px;width:170px;height:28px;background:linear-gradient(#dfeafb 0,#dce8fb 9px,#c4daf8 9px,#c6dbf8 22px,#d3e3f9 28px)"></div>
<div style="left:63px;top:517px;width:40px;height:28px;background:#fff;text-align:center;line-height:28px"><span style="letter-spacing:-0.125px">7</span> <span class="w" style="width:4px;transform:scaleX(1.3061)">/</span> <span style="letter-spacing:-0.125px">15</span></div>
<div style="left:181px;top:517px;width:50px;height:28px;background:#e3edfd"></div>
<div style="left:231px;top:517px;width:1115px;height:28px;background:linear-gradient(#e4e4e4 0,#f3f3f3 2px,#efefef 8px,#ededed 28px)"></div>
<svg style="left:11px;top:517px" width="240" height="28" viewBox="0 0 240 28">
<g fill="#17418f">
<rect x="3.400" y="6.400" width="2.100" height="14"/><path d="M13.300 6.400 L13.300 20.400 L5.600 13.400 Z"/><path d="M21.100 6.400 L21.100 20.400 L13.300 13.400 Z"/>
<path d="M41.700 6.400 L41.700 20.400 L33.400 13.400 Z"/>
<path d="M101.200 6.400 L101.200 20.400 L109.800 13.400 Z"/>
<path d="M121.400 6.400 L121.400 20.400 L129.700 13.400 Z"/><path d="M129.600 6.400 L129.600 20.400 L137.700 13.400 Z"/><rect x="137.500" y="6.400" width="2.100" height="14"/>
<path d="M165.300 8.400 L165.300 18.300 L155.300 18.300 Z"/>
<path d="M148.900 14.600 C150 8, 158 5.800, 162.500 13" fill="none" stroke="#17418f" stroke-width="3.200"/>
</g>
<path d="M230 8.700 L230 18.100 L224.700 13.400 Z" fill="#8b9bc9"/>
</svg>
<svg style="left:1330px;top:517px" width="16" height="28" viewBox="0 0 16 28"><path d="M5 8.500 L5 18 L10.500 13.200 Z" fill="#8b9bc9"/></svg>
</body>
</html>
